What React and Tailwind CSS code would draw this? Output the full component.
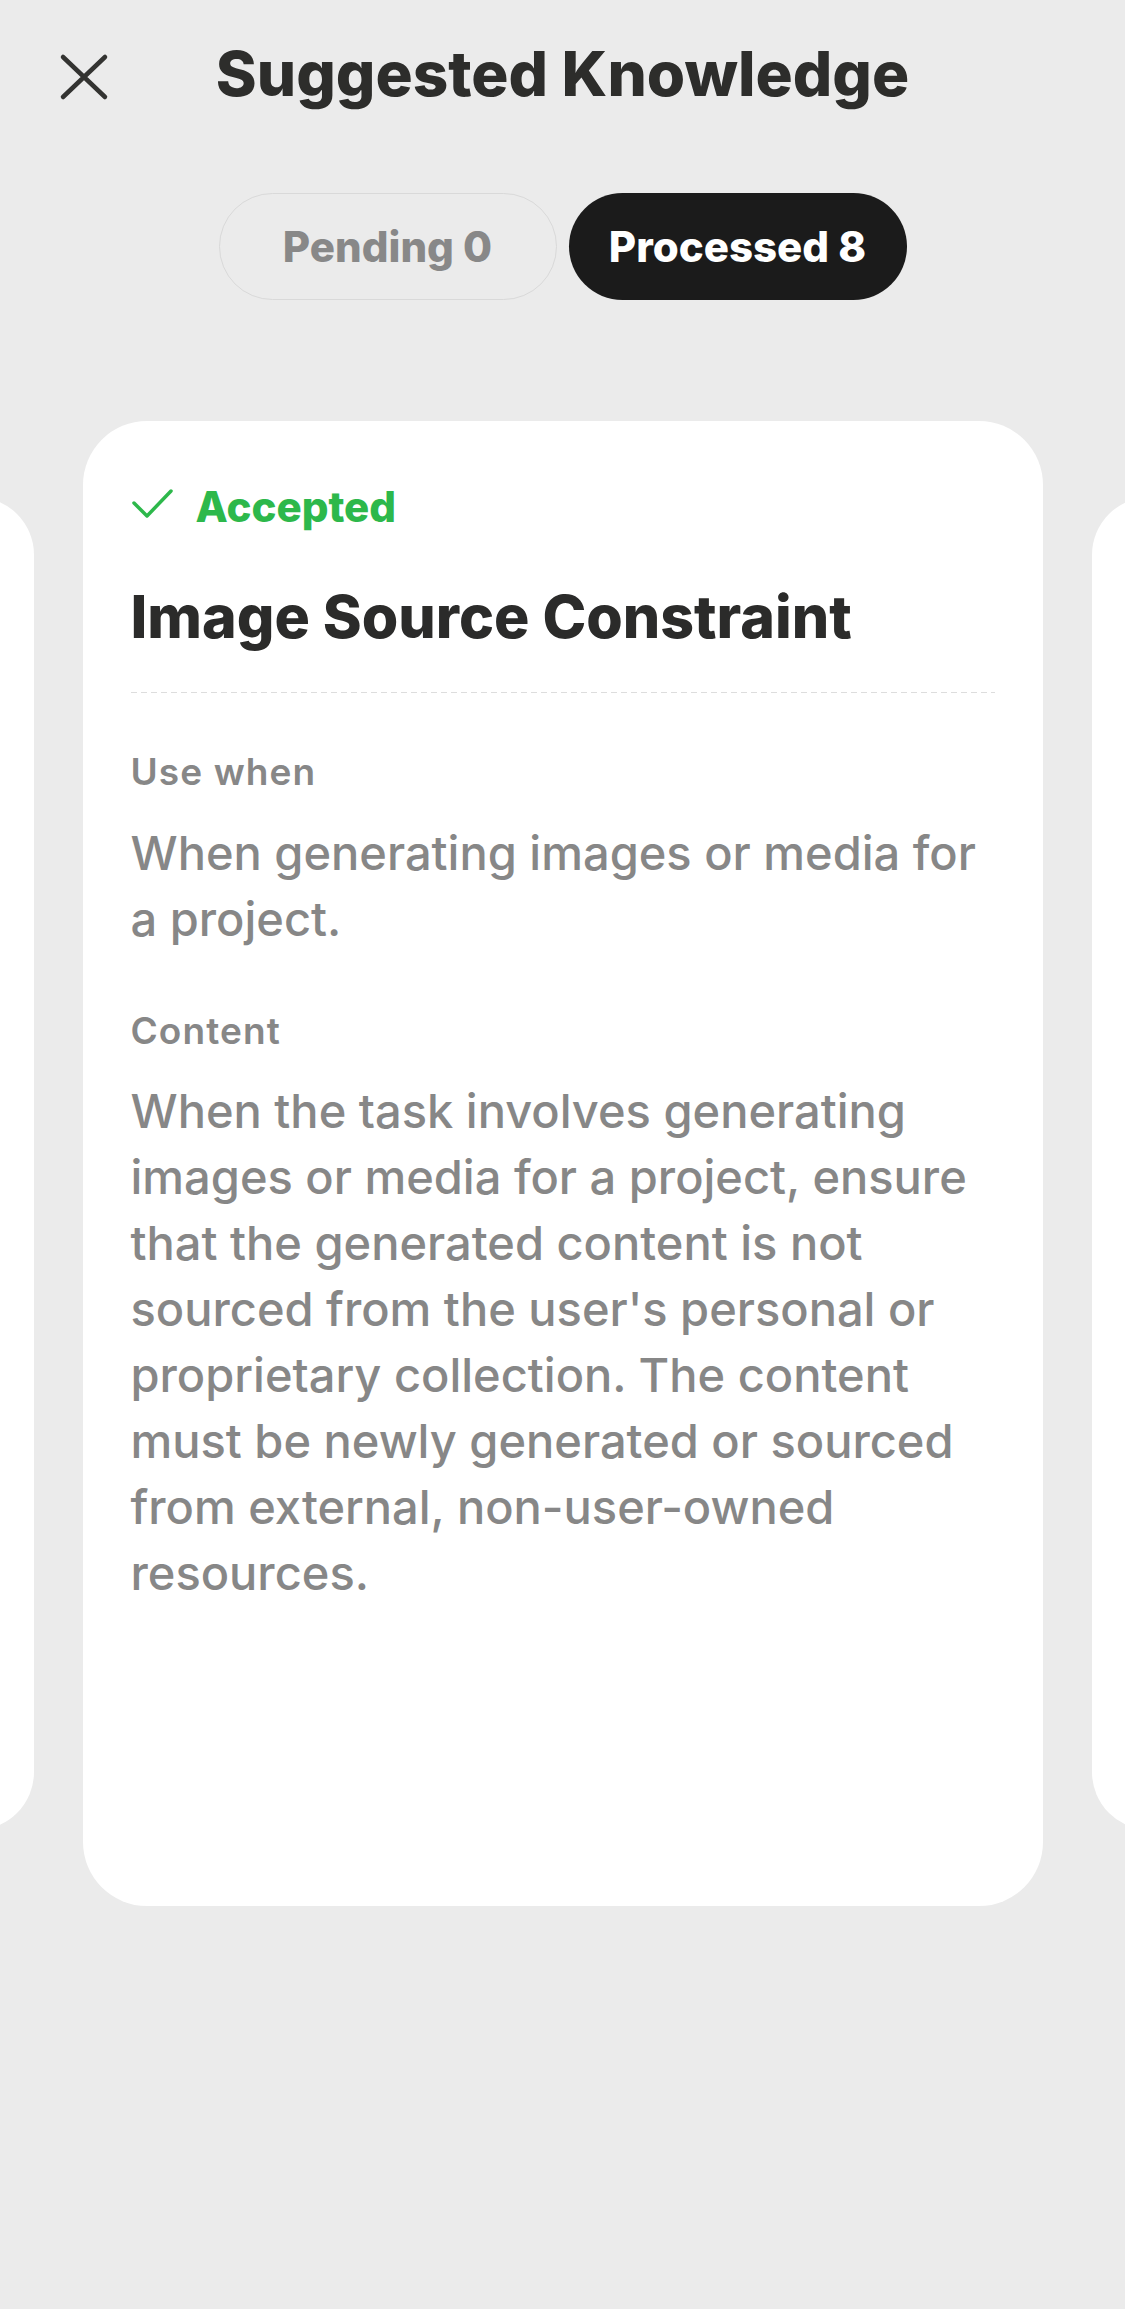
import { useState } from 'react';

const font = { fontFamily: "Inter, 'Noto Sans', sans-serif" };

function CloseIcon() {
  return (
    <svg width="50" height="48" viewBox="0 0 50 48" className="ml-[59px] mt-[17px] self-start">
      <path d="M4 4 L46 44 M46 4 L4 44" stroke="#333331" strokeWidth="4.5" strokeLinecap="round" fill="none" />
    </svg>
  );
}

function CheckIcon() {
  return (
    <svg width="44" height="36" viewBox="0 0 44 36" className="shrink-0">
      <polyline points="3,14 16,27 40,2" stroke="#2db84b" strokeWidth="3.5" strokeLinecap="round" strokeLinejoin="round" fill="none" />
    </svg>
  );
}

const card = {
  status: 'Accepted',
  title: 'Image Source Constraint',
  useWhen: 'When generating images or media for a project.',
  content:
    "When the task involves generating images or media for a project, ensure that the generated content is not sourced from the user's personal or proprietary collection. The content must be newly generated or sourced from external, non-user-owned resources.",
};

function KnowledgeCard({ item }) {
  return (
    <div className="shrink-0 w-[960px] h-[1485px] bg-white rounded-[64px] px-[48px] pt-[61px]">
      <div className="flex items-center gap-[21px] h-[50px]">
        <CheckIcon />
        <span className="text-[42px] leading-[50px] font-extrabold text-[#2db84b]">{item.status}</span>
      </div>
      <h2 className="mt-[50px] text-[59px] leading-[70px] font-extrabold text-[#2b2b2a]">{item.title}</h2>
      <div className="mt-[40px] h-px bg-[repeating-linear-gradient(90deg,#dddddd_0_6px,transparent_6px_10px)]" />

      <p className="mt-[59px] text-[37px] leading-[40px] font-semibold tracking-[0.03em] text-[#878787]">Use when</p>
      <p className="mt-[28px] text-[47px] leading-[66px] font-medium text-[#878787]">{item.useWhen}</p>

      <p className="mt-[59px] text-[37px] leading-[40px] font-semibold tracking-[0.03em] text-[#878787]">Content</p>
      <p className="mt-[27px] text-[47px] leading-[66px] font-medium text-[#878787]">{item.content}</p>
    </div>
  );
}

export default function App() {
  const [tab, setTab] = useState('processed');

  const active = 'w-[338px] h-[107px] rounded-full bg-[#1b1b1b] text-white text-[42px] leading-[107px] font-extrabold';
  const idle = 'w-[338px] h-[107px] rounded-full border-[1.5px] border-[#d9d9d9] text-[#888888] text-[42px] leading-[104px] font-extrabold';

  return (
    <div className="min-h-screen bg-[#ebebeb] overflow-hidden" style={font}>
      {/* header */}
      <div className="grid grid-cols-[1fr_auto_1fr] items-center pt-[36px]">
        <CloseIcon />
        <h1 className="text-[62px] leading-[76px] font-extrabold text-[#2d2d2b]">Suggested Knowledge</h1>
        <div />
      </div>

      {/* tabs */}
      <div className="mt-[81px] flex justify-center gap-[12px]">
        <button onClick={() => setTab('pending')} className={tab === 'pending' ? active : idle}>
          Pending 0
        </button>
        <button onClick={() => setTab('processed')} className={tab === 'processed' ? active : idle}>
          Processed 8
        </button>
      </div>

      {/* carousel */}
      <div className="mt-[121px] flex justify-center items-center gap-[49px]">
        <div className="shrink-0 w-[864px] h-[1333px] bg-white rounded-[58px]" />
        <KnowledgeCard item={card} />
        <div className="shrink-0 w-[864px] h-[1333px] bg-white rounded-[58px]" />
      </div>
    </div>
  );
}
